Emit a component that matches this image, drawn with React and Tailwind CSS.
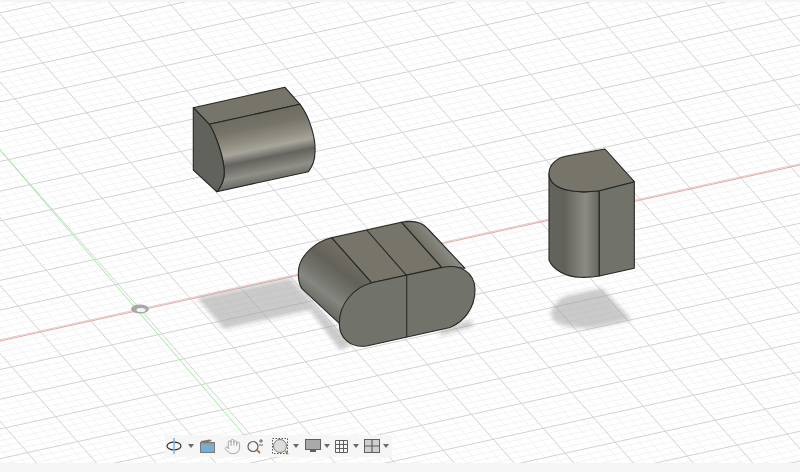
import React from 'react';
import { Hand } from 'lucide-react';

// ground plane: major cell vectors measured off the screenshot, origin at 140,309
const project = (u, v) => [140 + u * 50 + v * 21.9, 309 - u * 11 + v * 24.9];

const gridLines = () => {
  const minor = [];
  const major = [];
  for (let i = -150; i <= 200; i++) {
    const t = i / 5;
    const [x1, y1] = project(t, -40);
    const [x2, y2] = project(t, 40);
    const [x3, y3] = project(-40, t);
    const [x4, y4] = project(40, t);
    const segs = `M${x1} ${y1}L${x2} ${y2}M${x3} ${y3}L${x4} ${y4}`;
    if (i % 5 === 0) major.push(segs);
    else minor.push(segs);
  }
  return { minor: minor.join(''), major: major.join('') };
};

const Caret = () => (
  <svg width="6" height="4" viewBox="0 0 6 4" className="shrink-0">
    <path d="M0 0h6L3 4z" fill="#6b6b6b" />
  </svg>
);

const Viewport = () => {
  const { minor, major } = gridLines();
  const edge = { stroke: '#262624', strokeWidth: 1.1, strokeLinejoin: 'round' };

  return (
    <svg width="800" height="461" viewBox="0 2 800 461" className="block">
      <defs>
        <filter id="soft" x="-20%" y="-20%" width="140%" height="140%">
          <feGaussianBlur stdDeviation="2" />
        </filter>
        <filter id="haze">
          <feGaussianBlur stdDeviation="0.3" />
        </filter>
        <linearGradient id="roll" gradientUnits="userSpaceOnUse" x1="257" y1="112" x2="271" y2="181">
          <stop offset="0" stopColor="#6d6b61" />
          <stop offset="0.2" stopColor="#757368" />
          <stop offset="0.4" stopColor="#928f83" />
          <stop offset="0.52" stopColor="#a8a69b" />
          <stop offset="0.66" stopColor="#656460" />
          <stop offset="0.74" stopColor="#74736c" />
          <stop offset="0.86" stopColor="#90908a" />
          <stop offset="1" stopColor="#696860" />
        </linearGradient>
        <linearGradient id="pillLeft" gradientUnits="userSpaceOnUse" x1="318" y1="305" x2="352" y2="260">
          <stop offset="0" stopColor="#6a6a64" />
          <stop offset="0.25" stopColor="#85867f" />
          <stop offset="0.5" stopColor="#70706a" />
          <stop offset="0.72" stopColor="#64615a" />
          <stop offset="1" stopColor="#6f6c63" />
        </linearGradient>
        <linearGradient id="pillRightRoll" gradientUnits="userSpaceOnUse" x1="415" y1="240" x2="452" y2="210">
          <stop offset="0" stopColor="#6f6c62" />
          <stop offset="0.45" stopColor="#8e8f88" />
          <stop offset="1" stopColor="#5d5d58" />
        </linearGradient>
        <linearGradient id="drum" gradientUnits="userSpaceOnUse" x1="549" y1="0" x2="600" y2="0">
          <stop offset="0" stopColor="#65655d" />
          <stop offset="0.3" stopColor="#61615a" />
          <stop offset="0.55" stopColor="#7b7b73" />
          <stop offset="0.72" stopColor="#8b8b83" />
          <stop offset="0.88" stopColor="#75756d" />
          <stop offset="1" stopColor="#65655e" />
        </linearGradient>
      </defs>

      <rect x="0" y="0" width="800" height="472" fill="#ffffff" />
      <g filter="url(#haze)">
        <path d={minor} stroke="#f3f3f3" strokeWidth="1" fill="none" />
        <path d={major} stroke="#d2d2d2" strokeWidth="1" fill="none" />
      </g>
      <path d="M-5 342.1L800 165" stroke="#f7a3a1" strokeWidth="1" fill="none" />
      <path d="M0 150L263 457" stroke="#98f098" strokeWidth="1" fill="none" />

      {/* shadows on the ground */}
      <g filter="url(#soft)" fill="#a0a0a0" opacity="0.55">
        <path d="M197 298L290 278 312 301 352 345 340 350 310 310 224 329z" />
        <path d="M551 313Q553 302 566 296L602 288 632 320 594 328Q566 330 553 320z" />
        <path d="M440 330L470 320 474 326 440 336z" />
      </g>

      {/* origin marker */}
      <ellipse cx="140" cy="309" rx="9" ry="4.5" fill="#a8a8a8" filter="url(#haze)" />
      <ellipse cx="141" cy="310" rx="4.5" ry="2" fill="#f4f4f4" filter="url(#haze)" />

      <g filter="url(#haze)">
        {/* left body, quarter round */}
        <path d="M193.3 107.7L285 87.3 300 104.3 209.3 124.3z" fill="#77746b" {...edge} />
        <path
          d="M209.3 124.3L300 104.3C310 117 316 140 315 152C315 160 312 167 308.3 171.7L216.7 191.7C224 184 225 174 224 168C222 150 213 130 209.3 124.3z"
          fill="url(#roll)"
          {...edge}
        />
        <path
          d="M193.3 107.7L209.3 124.3C213 130 222 150 224 168C225 174 224 184 216.7 191.7L193.3 170z"
          fill="#62625b"
          {...edge}
        />

        {/* middle body, stadium */}
        <path
          d="M331.7 237.7C317 241 298.3 255 298.3 273.3C298.3 279 299 284 301.7 288.3L339.3 323.3L371.7 282.7z"
          fill="url(#pillLeft)"
          {...edge}
        />
        <path d="M331.7 237.7L401.7 222.3 441.7 267.3 371.7 282.7z" fill="#77746b" {...edge} />
        <path
          d="M401.7 222.3C413 220 422 222 428 229L465 268.3L441.7 267.3z"
          fill="url(#pillRightRoll)"
          {...edge}
        />
        <path
          d="M371.7 282.7L443.3 267.3C460 264 475 272 475 290C475 308 464 322 450 327.5L366.7 346C350 348 339.3 338 339.3 323.3C339.3 304 353 288 371.7 282.7z"
          fill="#71726b"
          {...edge}
        />
        <path d="M366.7 230L406.7 275.7V337.3" fill="none" {...edge} />

        {/* right body, half round column */}
        <path
          d="M549 173.3V260C553 270 566 277 580 277.3C587 277.5 594 277 599.3 276V190.7C575 194 549 190 549 173.3z"
          fill="url(#drum)"
          {...edge}
        />
        <path d="M599.3 190.7L634.3 181.7V268.3L599.3 276z" fill="#71726b" {...edge} />
        <path
          d="M549 173.3C549 165 556 158 567 156L605 149 634.3 181.7 599.3 190.7C575 194 549 190 549 173.3z"
          fill="#77746b"
          {...edge}
        />
      </g>
    </svg>
  );
};

const Toolbar = () => (
  <div className="absolute left-[165px] bottom-[6px] flex h-[22px] w-[227px] items-center bg-[#f6f6f6]/95">
    {/* orbit */}
    <svg width="16" height="18" viewBox="0 0 16 18" className="ml-px shrink-0">
      <ellipse cx="8" cy="9" rx="7" ry="3.8" fill="none" stroke="#2f2f2f" strokeWidth="1.2" />
      <path d="M8 1v16" stroke="#6db4ea" strokeWidth="1.4" />
    </svg>
    <span className="ml-[6px] flex"><Caret /></span>
    {/* pan panel */}
    <svg width="15" height="14" viewBox="0 0 15 14" className="ml-[6px] shrink-0">
      <path d="M1 4V2l9-1.500 2 1.500-8 2z" fill="#777" />
      <rect x="0.5" y="3.500" width="14" height="10" fill="#6fb0dc" stroke="#7a7a7a" />
      <rect x="1" y="4" width="13" height="2" fill="#9a9a9a" />
    </svg>
    {/* hand */}
    <Hand size={17} strokeWidth={1.2} color="#9a9a9a" className="ml-[9px] shrink-0" />
    {/* zoom */}
    <svg width="17" height="16" viewBox="0 0 17 16" className="ml-[6px] shrink-0">
      <circle cx="6" cy="8.500" r="5" fill="#f5f5f5" stroke="#5f5f5f" strokeWidth="1.2" />
      <path d="M10 12l3 3" stroke="#a87a3a" strokeWidth="1.8" />
      <path d="M12 3h4M14 1v4M12 7h4" stroke="#555" strokeWidth="0.9" fill="none" />
    </svg>
    {/* fit */}
    <svg width="17" height="17" viewBox="0 0 17 17" className="ml-[8px] shrink-0">
      <rect x="0.5" y="0.5" width="15" height="15" fill="none" stroke="#555" strokeDasharray="1.5 1.5" />
      <circle cx="8" cy="8" r="6.500" fill="#dcdcdc" stroke="#7d7d7d" />
      <path d="M13 13l3 3" stroke="#a87a3a" strokeWidth="1.6" />
    </svg>
    <span className="ml-[4px] flex"><Caret /></span>
    {/* display settings */}
    <svg width="16" height="14" viewBox="0 0 16 14" className="ml-[6px] shrink-0">
      <rect x="0.5" y="0.5" width="15" height="10" fill="#a9a9a9" stroke="#5f5f5f" />
      <rect x="5" y="11" width="6" height="2" fill="#5f5f5f" />
    </svg>
    <span className="ml-[3px] flex"><Caret /></span>
    {/* grid */}
    <svg width="13" height="13" viewBox="0 0 13 13" className="ml-[5px] shrink-0">
      <path d="M.5.500h12v12H.5zM4.500.500v12M8.500.500v12M.5 4.500h12M.5 8.500h12" fill="none" stroke="#5f5f5f" />
    </svg>
    <span className="ml-[5px] flex"><Caret /></span>
    {/* viewports */}
    <svg width="16" height="14" viewBox="0 0 16 14" className="ml-[5px] shrink-0">
      <rect x="0.5" y="0.5" width="15" height="13" fill="#cfcfcf" stroke="#5f5f5f" />
      <path d="M8 .500v13M.5 7h15" stroke="#5f5f5f" fill="none" strokeWidth="1.2" />
    </svg>
    <span className="ml-[3px] flex"><Caret /></span>
  </div>
);

const App = () => {
  return (
    <div className="flex h-[472px] w-[800px] flex-col overflow-hidden bg-[#f5f5f5]">
      <div className="h-[2px] shrink-0 bg-[#f5f5f5]" />
      <div className="relative h-[461px] shrink-0 overflow-hidden">
        <Viewport />
        <Toolbar />
      </div>
      <div className="flex-1 bg-[#f5f5f5]" />
    </div>
  );
};

export default App;
